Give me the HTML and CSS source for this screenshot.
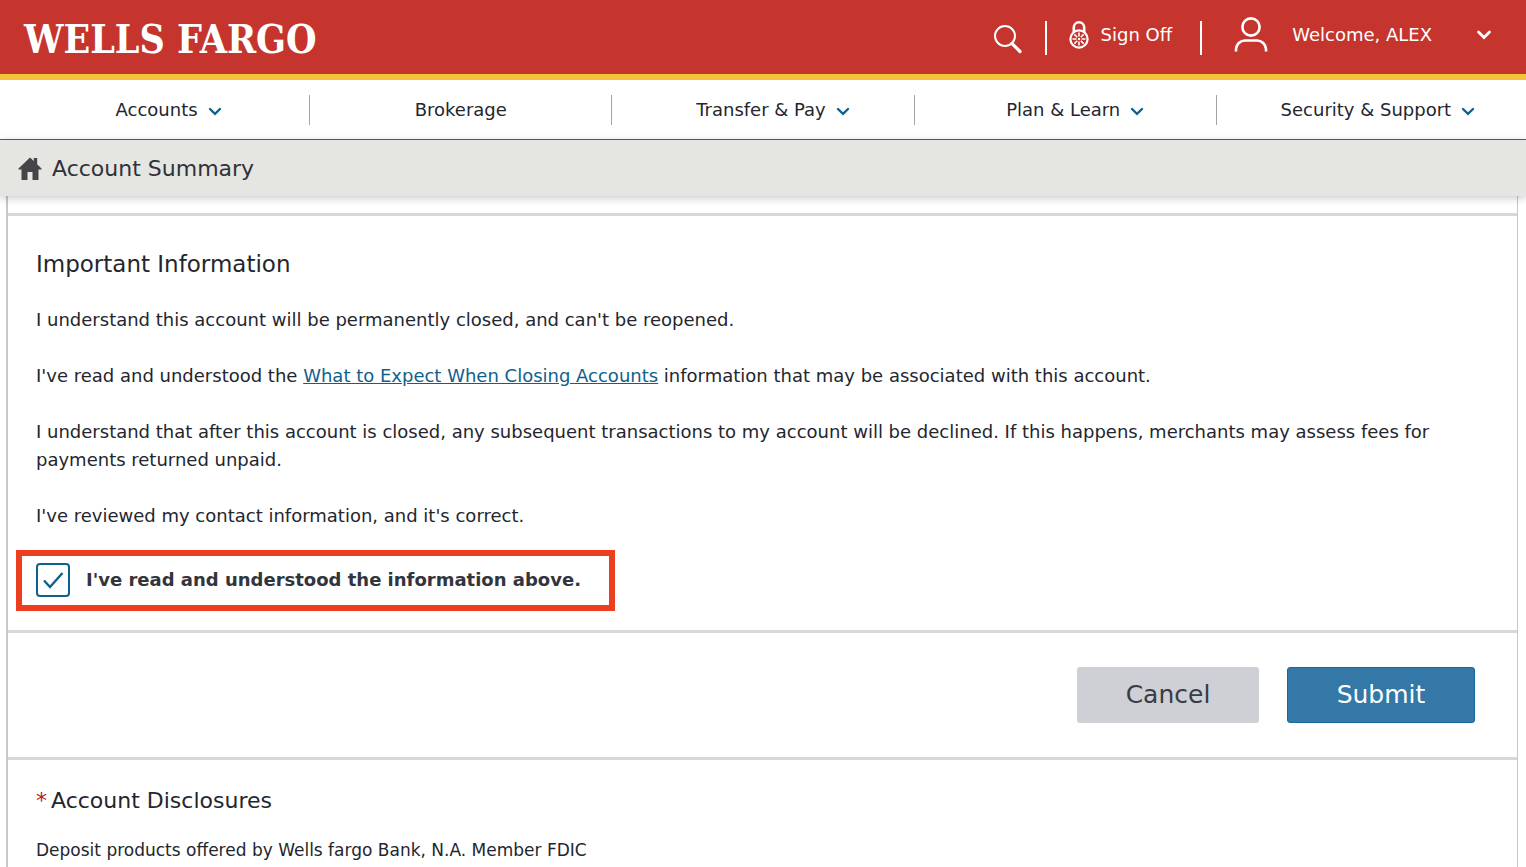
FILE: index.html
```html
<!DOCTYPE html>
<html lang="en">
<head>
<meta charset="utf-8">
<meta name="viewport" content="width=device-width, initial-scale=1">
<title>Account Summary</title>
<link rel="stylesheet" href="styles.css">
</head>
<body>
<header class="masthead">
  <a class="logo" href="#">WELLS FARGO</a>
  <div class="tools">
    <button class="tool search" type="button" aria-label="Search">
      <svg width="30" height="30" viewBox="0 0 30 30" fill="none" stroke="#fff"><circle cx="12" cy="12" r="10" stroke-width="2"/><path d="M19 19.500 27 27.500" stroke-width="3.200" stroke-linecap="round"/></svg>
    </button>
    <a class="tool signoff" href="#">
      <svg width="20" height="30" viewBox="0 0 20 30" fill="none" stroke="#fff"><path d="M4.800 12V7.500a5.200 5.200 0 0 1 10.400 0V12" stroke-width="2.600"/><circle cx="10" cy="19" r="8.600" stroke-width="2.200"/><path d="M10 12.500v4M10 21.500v4M3.500 19h4M12.500 19h4M5.400 14.400l2.800 2.800M11.800 20.800l2.800 2.800M14.600 14.400l-2.800 2.800M8.200 20.800l-2.800 2.800" stroke-width="1.600"/><circle cx="10" cy="19" r="1.200" fill="#fff" stroke="none"/></svg>
      <span>Sign Off</span>
    </a>
    <button class="tool profile" type="button">
      <svg width="34" height="36" viewBox="0 0 34 36" fill="none" stroke="#fff" stroke-width="2.600"><circle cx="17" cy="10" r="8.600"/><path d="M2 34.500V32a9 9 0 0 1 9-8.500h12a9 9 0 0 1 9 8.500v2.500"/></svg>
      <span class="welcome">Welcome, ALEX</span>
      <svg class="caret" width="16" height="10" viewBox="0 0 16 10" fill="none" stroke="#fff" stroke-width="2.800" stroke-linecap="round"><path d="M2.500 2 8 7.500 13.500 2"/></svg>
    </button>
  </div>
</header>
<nav class="mainnav">
  <button class="item menu" type="button">Accounts <svg width="14" height="9" viewBox="0 0 14 9" class="chev"><path d="M2 2 7 6.800 12 2"/></svg></button>
  <a class="item" href="#">Brokerage</a>
  <button class="item menu" type="button">Transfer &amp; Pay <svg width="14" height="9" viewBox="0 0 14 9" class="chev"><path d="M2 2 7 6.800 12 2"/></svg></button>
  <button class="item menu" type="button">Plan &amp; Learn <svg width="14" height="9" viewBox="0 0 14 9" class="chev"><path d="M2 2 7 6.800 12 2"/></svg></button>
  <button class="item menu" type="button">Security &amp; Support <svg width="14" height="9" viewBox="0 0 14 9" class="chev"><path d="M2 2 7 6.800 12 2"/></svg></button>
</nav>
<div class="crumb">
  <a class="crumb-link" href="#">
    <svg width="24" height="24" viewBox="0 0 24 24" fill="#43454b"><path d="M12 .5 15.800 4V1h3.400v6.300L23.500 11.500V12.500H20.500V23H14.500V15H9.500V23H3.500V12.500H.5V11.500Z"/></svg>
    <span>Account Summary</span>
  </a>
</div>
<main class="panel">
  <section class="info">
    <h2 class="title">Important Information</h2>
    <p>I understand this account will be permanently closed, and can't be reopened.</p>
    <p>I've read and understood the <a class="link" href="#">What to Expect When Closing Accounts</a> information that may be associated with this account.</p>
    <p>I understand that after this account is closed, any subsequent transactions to my account will be declined. If this happens, merchants may assess fees for payments returned unpaid.</p>
    <p>I've reviewed my contact information, and it's correct.</p>
    <div class="confirm">
      <input class="check" type="checkbox" id="agree" checked>
      <label for="agree">I've read and understood the information above.</label>
    </div>
  </section>
  <section class="actions">
    <button class="btn cancel" type="button">Cancel</button>
    <button class="btn submit" type="submit">Submit</button>
  </section>
  <section class="disclosures">
    <h2 class="title subtitle"><span class="star">*</span>Account Disclosures</h2>
    <p class="small">Deposit products offered by Wells fargo Bank, N.A. Member FDIC</p>
  </section>
</main>
</body>
</html>
```
FILE: styles.css
```css
* { box-sizing: border-box; }
html { overflow: hidden; }
body {
  margin: 0;
  background: #fff;
  color: #24262e;
  font: 18px/28px Verdana, "DejaVu Sans", sans-serif;
}
button { font: inherit; color: inherit; background: none; border: 0; padding: 0; cursor: pointer; }
a { color: inherit; text-decoration: none; }
h2, p { margin: 0; }
svg { display: block; flex: none; }

.masthead {
  display: flex;
  align-items: center;
  justify-content: space-between;
  height: 80px;
  padding: 0 34px 0 24px;
  background: #c5352e;
  border-bottom: 6px solid #f5c33b;
  color: #fff;
}
.logo { font: bold 39px/48px "DejaVu Serif Condensed", "DejaVu Serif", serif; padding-top: 4px; }
.tools { display: flex; align-items: center; padding-top: 2px; }
.tool { display: flex; align-items: center; height: 34px; padding-bottom: 6px; }
.search { padding: 2px 22px 0 0; }
.signoff { gap: 12px; padding-left: 22px; padding-right: 28px; border: solid #fff; border-width: 0 2px; }
.profile { padding-left: 32px; }
.welcome { margin: 0 44px 0 24px; }

.mainnav {
  display: grid;
  grid-template-columns: repeat(5, 1fr);
  align-items: center;
  height: 60px;
  padding: 0 7px 0 8px;
  border-bottom: 1px solid #5c5c60;
}
.item { display: flex; align-items: center; justify-content: center; gap: 10px; height: 30px; border-right: 1px solid #a4a4a8; }
.item:last-child { border-right: 0; }
.menu { padding-left: 20px; }
.chev { margin-top: 3px; fill: none; stroke: #0f618d; stroke-width: 2.4; stroke-linecap: round; }

.crumb {
  position: relative;
  height: 56px;
  padding: 2px 18px 0;
  background: #e5e6e1;
  box-shadow: 0 2px 8px rgba(0, 0, 0, .22);
  font-size: 22px;
}
.crumb-link { display: flex; align-items: center; gap: 10px; height: 54px; color: #30323a; }

.panel { margin: 0 8px 0 6px; padding-top: 17px; border: solid #c8c8ca; border-width: 0 1px 0 2px; }
.info { padding: 34px 28px 19px; border-top: 3px solid #d8d8d8; }
.info p { margin-top: 28px; }
.title { font-size: 23px; line-height: 28px; font-weight: normal; }
.subtitle { font-size: 22px; }
.link { color: #0f618d; text-decoration: underline; }
.confirm {
  display: inline-flex;
  align-items: center;
  gap: 16px;
  margin: 20px 0 0 -20px;
  padding: 7px 28px 8px 14px;
  border: 6px solid #ed3f1f;
  font-weight: bold;
  color: #33353c;
  vertical-align: top;
}
.check {
  appearance: none;
  width: 34px;
  height: 34px;
  margin: 0;
  border: 2px solid #0f618d;
  border-radius: 4px;
  background: #fff url("data:image/svg+xml,%3Csvg xmlns='http://www.w3.org/2000/svg' viewBox='0 0 30 30' fill='none' stroke='%230f618d' stroke-width='2.400'%3E%3Cpath d='M6 15.500l6 6.500L24.500 8'/%3E%3C/svg%3E") center / 30px no-repeat;
}
.actions { display: flex; justify-content: flex-end; gap: 28px; padding: 34px 42px; border-top: 3px solid #d8d8d8; }
.btn { height: 56px; border-radius: 3px; font-size: 25px; }
.cancel { width: 182px; background: #cfd0d6; color: #3a3c42; }
.submit { width: 188px; background: #3478a8; border: 1px solid #16689b; color: #fff; }
.disclosures { padding: 27px 28px; border-top: 3px solid #d8d8d8; }
.star { color: #b3201c; margin-right: 4px; }
.small { margin-top: 21px; font-size: 17px; }
```
